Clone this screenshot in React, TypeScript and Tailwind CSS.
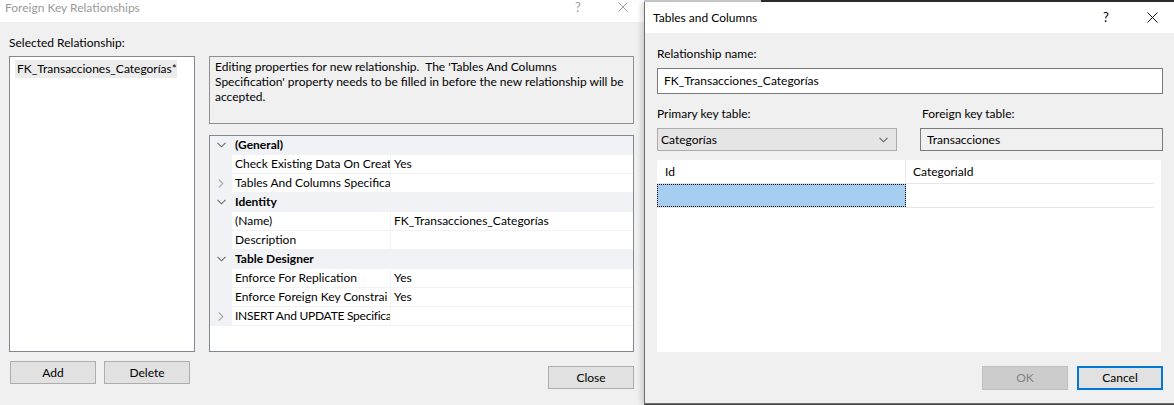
import React from "react";

const Chevron = ({ dir, color }: { dir: "down" | "right"; color: string }) =>
  dir === "down" ? (
    <svg width="9" height="6" viewBox="0 0 9 6" className="block">
      <path d="M0.5 0.8 L4.5 4.8 L8.5 0.8" fill="none" stroke={color} strokeWidth="1.1" />
    </svg>
  ) : (
    <svg width="6" height="9" viewBox="0 0 6 9" className="block">
      <path d="M0.8 0.5 L4.8 4.5 L0.8 8.5" fill="none" stroke={color} strokeWidth="1.1" />
    </svg>
  );

const XIcon = ({ size, color }: { size: number; color: string }) => (
  <svg width={size} height={size} viewBox={`0 0 ${size} ${size}`} className="block">
    <path d={`M0.5 0.5 L${size - 0.5} ${size - 0.5} M${size - 0.5} 0.5 L0.5 ${size - 0.5}`} stroke={color} strokeWidth="1" fill="none" />
  </svg>
);

type Row =
  | { kind: "cat"; label: string }
  | { kind: "prop"; name: string; value?: string; expandable?: boolean; tight?: boolean };

const rows: Row[] = [
  { kind: "cat", label: "(General)" },
  { kind: "prop", name: "Check Existing Data On Creat", value: "Yes" },
  { kind: "prop", name: "Tables And Columns Specifica", expandable: true },
  { kind: "cat", label: "Identity" },
  { kind: "prop", name: "(Name)", value: "FK_Transacciones_Categorías" },
  { kind: "prop", name: "Description" },
  { kind: "cat", label: "Table Designer" },
  { kind: "prop", name: "Enforce For Replication", value: "Yes" },
  { kind: "prop", name: "Enforce Foreign Key Constrai", value: "Yes" },
  { kind: "prop", name: "INSERT And UPDATE Specifica", expandable: true, tight: true },
];

function PropertyGrid() {
  return (
    <div className="mt-[11px] h-[217px] border border-[#828790] bg-white flex flex-col overflow-hidden">
      {rows.map((r, i) =>
        r.kind === "cat" ? (
          <div key={i} className="h-[19px] shrink-0 flex bg-[#f0f2f5] border-b border-[#f0f2f5]">
            <div className="w-[22px] flex items-center justify-center">
              <Chevron dir="down" color="#6a6a6a" />
            </div>
            <div className="pl-[3px] font-bold leading-[18px] whitespace-nowrap">{r.label}</div>
          </div>
        ) : (
          <div key={i} className="h-[19px] shrink-0 flex border-b border-[#f0f2f5]">
            <div className="w-[22px] bg-[#f0f2f5] flex items-center justify-center">
              {r.expandable ? <Chevron dir="right" color="#a8a8a8" /> : null}
            </div>
            <div
              className={
                r.tight
                  ? "w-[159px] pl-[3px] leading-[18px] whitespace-nowrap overflow-hidden border-r border-[#f0f2f5] tracking-[-0.25px]"
                  : "w-[159px] pl-[3px] leading-[18px] whitespace-nowrap overflow-hidden border-r border-[#f0f2f5]"
              }
            >
              {r.name}
            </div>
            <div className="flex-1 pl-[3px] leading-[18px] whitespace-nowrap overflow-hidden">{r.value ?? ""}</div>
          </div>
        )
      )}
    </div>
  );
}

export default function App() {
  return (
    <div className="flex w-[1174px] h-[405px] overflow-hidden bg-[#f0f0f0] text-[12px] leading-[16px] text-black font-['Lato',sans-serif]">
      {/* Left dialog: Foreign Key Relationships */}
      <div className="w-[644px] shrink-0 flex flex-col">
        <div className="h-[22px] bg-white flex items-start">
          <span className="pl-[5px] leading-[15px] text-[#9a9a9a] whitespace-nowrap">Foreign Key Relationships</span>
          <div className="ml-auto flex items-start gap-[34px] pr-[16px] pt-[1px]">
            <span className="w-[12px] text-center text-[13px] leading-[13px] text-[#a0a0a0]">?</span>
            <div className="pt-[1px]">
              <XIcon size={10} color="#a0a0a0" />
            </div>
          </div>
        </div>
        <div className="flex-1 flex pl-[9px] pt-[13px]">
          <div className="w-[186px] flex flex-col">
            <div className="h-[16px] whitespace-nowrap">Selected Relationship:</div>
            <div className="mt-[5px] h-[296px] border border-[#828790] bg-white">
              <div className="mt-[3px] ml-[5px] w-[162px] h-[18px] bg-[#ececec] pl-[2px] leading-[18px] whitespace-nowrap">
                FK_Transacciones_Categorías*
              </div>
            </div>
            <div className="mt-[9px] ml-[1px] flex gap-[8px]">
              <button className="w-[86px] h-[23px] bg-[#e1e1e1] border border-[#adadad] leading-[21px]">Add</button>
              <button className="w-[86px] h-[23px] bg-[#e1e1e1] border border-[#adadad] leading-[21px]">Delete</button>
            </div>
          </div>
          <div className="ml-[14px] w-[425px] flex flex-col pt-[21px]">
            <div className="h-[68px] border border-[#8f8f8f] bg-[#f0f0f0] px-[5px] pt-[2px] leading-[15px] whitespace-pre">
              <div>Editing properties for new relationship.  The 'Tables And Columns</div>
              <div>Specification' property needs to be filled in before the new relationship will be</div>
              <div>accepted.</div>
            </div>
            <PropertyGrid />
            <button className="mt-[14px] self-end w-[86px] h-[23px] bg-[#e1e1e1] border border-[#adadad] leading-[21px]">
              Close
            </button>
          </div>
        </div>
      </div>

      {/* Right dialog: Tables and Columns */}
      <div className="flex-1 flex flex-col relative z-10">
        <div className="h-[2px] flex">
          <div className="w-[117px] bg-[#cfcfcf]" />
          <div className="flex-1 bg-[#2d2d30]" />
        </div>
        <div className="h-[402px] flex flex-col border-l border-b border-[#6e6e6e] shadow-[-3px_0_5px_rgba(0,0,0,0.14)]">
          <div className="h-[31px] bg-white flex items-center">
            <span className="pl-[8px] whitespace-nowrap">Tables and Columns</span>
            <div className="ml-auto flex items-center gap-[35px] pr-[16px]">
              <span className="w-[12px] text-center text-[13px] leading-[15px]">?</span>
              <XIcon size={11} color="#111" />
            </div>
          </div>
          <div className="flex-1 flex flex-col bg-[#f0f0f0] pl-[12px] pr-[11px] pt-[13px]">
            <div className="h-[16px] whitespace-nowrap">Relationship name:</div>
            <div className="mt-[6px] h-[26px] border border-[#7a7a7a] bg-white pl-[6px] leading-[24px] whitespace-nowrap">
              FK_Transacciones_Categorías
            </div>
            <div className="mt-[12px] flex">
              <div className="w-[240px] flex flex-col">
                <div className="h-[16px] whitespace-nowrap">Primary key table:</div>
                <div className="mt-[6px] h-[23px] bg-[#e5e5e5] border border-[#acacac] flex items-center pl-[3px] pr-[8px]">
                  <span className="flex-1 leading-[21px]">Categorías</span>
                  <Chevron dir="down" color="#606060" />
                </div>
              </div>
              <div className="ml-[23px] flex-1 flex flex-col">
                <div className="h-[16px] pl-[2px] whitespace-nowrap">Foreign key table:</div>
                <div className="mt-[6px] h-[23px] bg-[#f0f0f0] border border-[#7a7a7a] pl-[6px] leading-[21px]">
                  Transacciones
                </div>
              </div>
            </div>
            <div className="mt-[9px] mr-[2px] h-[192px] bg-white">
              <div className="w-[497px] flex h-[24px] border-b border-[#e6e6e6]">
                <div className="w-[249px] pl-[8px] leading-[23px] border-r border-[#e6e6e6]">Id</div>
                <div className="flex-1 pl-[7px] leading-[23px]">CategoriaId</div>
              </div>
              <div className="w-[497px] flex h-[24px] border-b border-[#e6e6e6]">
                <div className="w-[249px] bg-[#a6cef0] border border-dotted border-black" />
                <div className="flex-1" />
              </div>
            </div>
            <div className="mt-[14px] flex justify-end gap-[9px]">
              <button className="w-[86px] h-[24px] bg-[#cccccc] border border-[#bfbfbf] text-[#838383] leading-[22px]">OK</button>
              <button className="w-[86px] h-[24px] bg-[#e1e1e1] border-2 border-[#0078d7] leading-[20px]">Cancel</button>
            </div>
          </div>
        </div>
        <div className="h-[1px] bg-[#4a4a4a]" />
      </div>
    </div>
  );
}
